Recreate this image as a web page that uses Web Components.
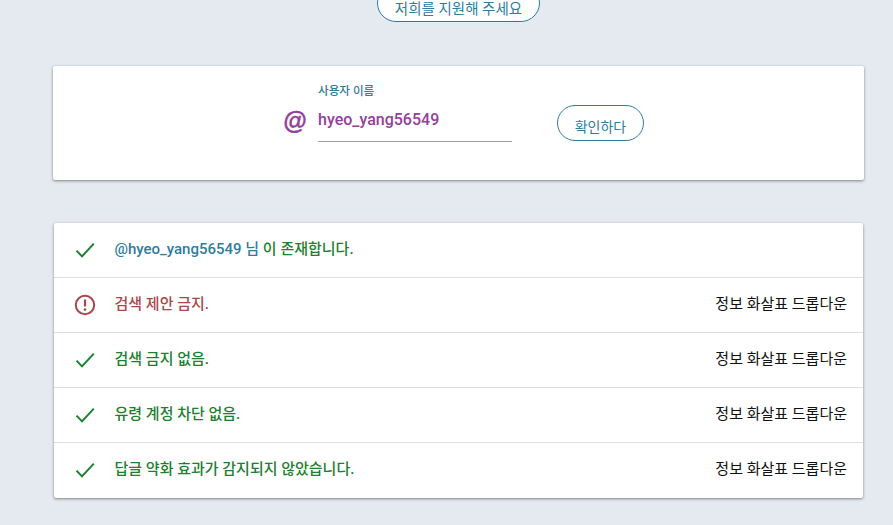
<!DOCTYPE html>
<html lang="ko">
<head>
<meta charset="utf-8">
<title>검색 금지 확인</title>
<style>
  html, body { margin: 0; height: 100%; overflow: hidden; background: #e4eaf0; }
  body { font-family: Roboto, "Noto Sans CJK KR", sans-serif; }
</style>
</head>
<body>
<check-page>
  <pill-button slot="support" style="--w:163px;--h:38px;--pt:8px;--fs:14.5px">저희를 지원해 주세요</pill-button>
  <search-card slot="search" label="사용자 이름" value="hyeo_yang56549"></search-card>
  <result-list slot="results">
    <result-row status="ok"><span style="color:#2e7d9f">@hyeo_yang56549 님</span> 이 존재합니다.</result-row>
    <result-row status="bad" more>검색 제안 금지.</result-row>
    <result-row status="ok" more>검색 금지 없음.</result-row>
    <result-row status="ok" more>유령 계정 차단 없음.</result-row>
    <result-row status="ok" more>답글 약화 효과가 감지되지 않았습니다.</result-row>
  </result-list>
</check-page>
<script>
  function define(name, html, cls) {
    var t = document.createElement('template');
    t.innerHTML = html;
    customElements.define(name, class extends (cls || HTMLElement) {
      constructor() {
        super();
        this.attachShadow({ mode: 'open' }).appendChild(t.content.cloneNode(true));
      }
    });
  }

  define('check-page', `
    <style>
      :host { display: block; }
      .wrap { display: flex; flex-direction: column; padding: 0 29px 0 53px; }
      .top { display: flex; justify-content: center; margin: -16px 0 44px; }
      .gap { height: 43px; }
    </style>
    <div class="wrap">
      <div class="top"><slot name="support"></slot></div>
      <slot name="search"></slot>
      <div class="gap"></div>
      <slot name="results"></slot>
    </div>`);

  define('pill-button', `
    <style>
      :host { display: inline-flex; }
      .b {
        box-sizing: border-box; width: var(--w); height: var(--h);
        display: flex; align-items: center; justify-content: center;
        padding-top: var(--pt, 0);
        border: 1px solid #2e7d9f; border-radius: 19px; background: #fff;
        color: #2e7d9f; font-size: var(--fs, 14px); white-space: nowrap;
      }
    </style>
    <div class="b"><slot></slot></div>`);

  define('search-card', `
    <style>
      :host { display: block; }
      .card {
        height: 114px; box-sizing: border-box; background: #fff; border-radius: 2px;
        box-shadow: 0 1px 3px rgba(0,0,0,.45);
        display: flex; justify-content: center; padding: 17px 0 0 10px;
      }
      .at { width: 22px; margin: 24px 13px 0 0; text-align: right; font: italic bold 24px "Liberation Sans", sans-serif; -webkit-text-stroke: .4px #93409b; color: #93409b; line-height: 28px; }
      .field { width: 194px; height: 59px; border-bottom: 1px solid #9e9e9e; box-sizing: border-box; }
      label { display: block; font-size: 11.6px; font-weight: 500; line-height: 14px; margin-top: 1px; color: #2e7d9f; }
      .val { font-size: 16px; font-weight: 500; line-height: 20px; margin-top: 12px; color: #93409b; }
      .act { margin: 22px 0 0 45px; }
    </style>
    <div class="card">
      <span class="at">@</span>
      <div class="field"><label id="l"></label><div class="val" id="v"></div></div>
      <div class="act"><pill-button style="--w:87px;--h:36px;--pt:6px">확인하다</pill-button></div>
    </div>`, class extends HTMLElement {
      connectedCallback() {
        this.shadowRoot.getElementById('l').textContent = this.getAttribute('label');
        this.shadowRoot.getElementById('v').textContent = this.getAttribute('value');
      }
    });

  define('result-list', `
    <style>
      :host { display: block; margin: 0 1px; background: #fff; border-radius: 2px; box-shadow: 0 1px 3px rgba(0,0,0,.45); }
      ::slotted(result-row:last-child) { --line: transparent; }
    </style>
    <slot></slot>`);

  var ICONS = {
    ok: '<svg width="24" height="24" viewBox="0 0 24 24"><path d="M3.5 12.6 9 18.4 20.8 5.6" fill="none" stroke="#1b8030" stroke-width="2"/></svg>',
    bad: '<svg width="24" height="24" viewBox="0 0 24 24"><circle cx="12" cy="12" r="9.2" fill="none" stroke="#a8474b" stroke-width="2"/><path d="M12 6.5v7" stroke="#a8474b" stroke-width="2.2"/><circle cx="12" cy="16.6" r="1.3" fill="#a8474b"/></svg>'
  };

  define('result-row', `
    <style>
      :host { display: block; }
      .row {
        box-sizing: border-box; height: 55px; display: flex; align-items: flex-start;
        padding: 0 16px 0 19px; border-bottom: 1px solid var(--line, #dedede);
      }
      .icon { width: 24px; height: 24px; margin-top: 15px; }
      .text { margin: 16px 0 0 17.5px; font-size: 15px; line-height: 20px; font-weight: 500; color: var(--c); white-space: nowrap; flex: 1; }
      .more { font-size: 15px; line-height: 20px; margin-top: 16px; color: #111; white-space: nowrap; }
      .more[hidden] { display: none; }
    </style>
    <div class="row">
      <span class="icon" id="i"></span>
      <span class="text"><slot></slot></span>
      <span class="more" id="m">정보 화살표 드롭다운</span>
    </div>`, class extends HTMLElement {
      connectedCallback() {
        var s = this.getAttribute('status');
        this.style.setProperty('--c', s === 'ok' ? '#1b8030' : '#a8474b');
        this.shadowRoot.getElementById('i').innerHTML = ICONS[s];
        this.shadowRoot.getElementById('m').hidden = !this.hasAttribute('more');
      }
    });
</script>
</body>
</html>
